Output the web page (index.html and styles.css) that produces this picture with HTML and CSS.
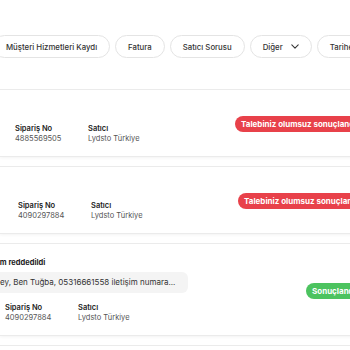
FILE: index.html
```html
<!DOCTYPE html>
<html lang="tr">
<head>
    <meta charset="UTF-8">
    <meta name="viewport" content="width=device-width, initial-scale=1.0">
    <title>Taleplerim</title>
    <link rel="stylesheet" href="styles.css">
</head>
<body>
    <div class="filters">
        <button class="pill">Müşteri Hizmetleri Kaydı</button>
        <button class="pill">Fatura</button>
        <button class="pill">Satıcı Sorusu</button>
        <button class="pill">Diğer
            <svg class="chevron" viewBox="0 0 10 6" width="8" height="5">
                <path d="M1 1l4 4 4-4" fill="none" stroke="#333" stroke-width="1.3" stroke-linecap="round" stroke-linejoin="round"/>
            </svg>
        </button>
        <button class="pill">Tarihe Göre</button>
    </div>

    <div class="list">
        <div class="card card-one">
            <div class="card-main">
                <div class="card-head-empty"></div>
                <div class="info">
                    <div class="info-col">
                        <div class="label">Sipariş No</div>
                        <div class="value">4885569505</div>
                    </div>
                    <div class="info-col">
                        <div class="label">Satıcı</div>
                        <div class="value">Lydsto Türkiye</div>
                    </div>
                </div>
            </div>
            <span class="badge badge-red">Talebiniz olumsuz sonuçlandı</span>
        </div>

        <div class="card card-two">
            <div class="card-main">
                <div class="card-head-empty"></div>
                <div class="info">
                    <div class="info-col">
                        <div class="label">Sipariş No</div>
                        <div class="value">4090297884</div>
                    </div>
                    <div class="info-col">
                        <div class="label">Satıcı</div>
                        <div class="value">Lydsto Türkiye</div>
                    </div>
                </div>
            </div>
            <span class="badge badge-red">Talebiniz olumsuz sonuçlandı</span>
        </div>

        <div class="card card-three">
            <div class="card-main">
                <div class="card-title">İade talebim reddedildi</div>
                <div class="message">Merhaba Ahmet Bey, Ben Tuğba, 05316661558 iletişim numara...</div>
                <div class="info">
                    <div class="info-col">
                        <div class="label">Sipariş No</div>
                        <div class="value">4090297884</div>
                    </div>
                    <div class="info-col">
                        <div class="label">Satıcı</div>
                        <div class="value">Lydsto Türkiye</div>
                    </div>
                </div>
            </div>
            <span class="badge badge-green">Sonuçlandı</span>
        </div>

        <div class="card card-four"></div>
    </div>
</body>
</html>
```

FILE: styles.css
```css
body {
    margin: 0;
    font-family: Inter, "Noto Sans", sans-serif;
    color: #222;
    background: #fff;
    overflow: hidden;
}
.filters {
    display: flex;
    gap: 5px;
    margin-left: -7px;
    padding-top: 35px;
    white-space: nowrap;
}
.pill {
    flex-shrink: 0;
    display: flex;
    align-items: center;
    gap: 8px;
    height: 23px;
    padding: 0 12px;
    border: 1px solid #e4e4e4;
    border-radius: 12px;
    background: #fff;
    font-family: inherit;
    font-size: 7.8px;
    font-weight: 500;
    color: #333;
}
.list {
    margin-top: 32px;
}
.card {
    display: flex;
    align-items: center;
    width: 420px;
    padding: 14px 0 12px;
    margin-bottom: 11px;
    background: #fff;
    box-shadow: 0 0 0 1px #ebebeb, 0 2px 3px rgba(0, 0, 0, 0.05);
    white-space: nowrap;
}
.card-one {
    padding-left: 15px;
}
.card-two {
    padding-left: 18px;
}
.card-three {
    padding-left: 5px;
}
.card-four {
    height: 20px;
}
.card-main {
    flex-shrink: 0;
}
.card-one .card-main, .card-two .card-main {
    width: 220px;
}
.card-three .card-main {
    width: 301px;
}
.card-head-empty {
    height: 20px;
}
.card-title {
    margin-left: -43px;
    font-size: 7.5px;
    font-weight: 700;
    line-height: 10px;
    color: #222;
}
.message {
    width: 266px;
    height: 21px;
    margin-top: 4px;
    margin-left: -83px;
    padding-left: 10px;
    box-sizing: border-box;
    line-height: 21px;
    border-radius: 6px;
    background: #f4f4f4;
    font-size: 8px;
    color: #333;
    overflow: hidden;
}
.card-three .info {
    margin-top: 10px;
}
.info {
    display: flex;
}
.info-col:first-child {
    width: 73px;
}
.label {
    font-size: 7.5px;
    font-weight: 600;
    line-height: 10px;
    color: #222;
}
.value {
    font-size: 7.5px;
    line-height: 10px;
    color: #555;
}
.badge {
    flex-shrink: 0;
    height: 16px;
    padding: 0 6px;
    border-radius: 8px;
    font-size: 8px;
    font-weight: 700;
    line-height: 16px;
    color: #fff;
}
.badge-red {
    background: #e8414a;
}
.badge-green {
    background: #4cc35f;
}
```
